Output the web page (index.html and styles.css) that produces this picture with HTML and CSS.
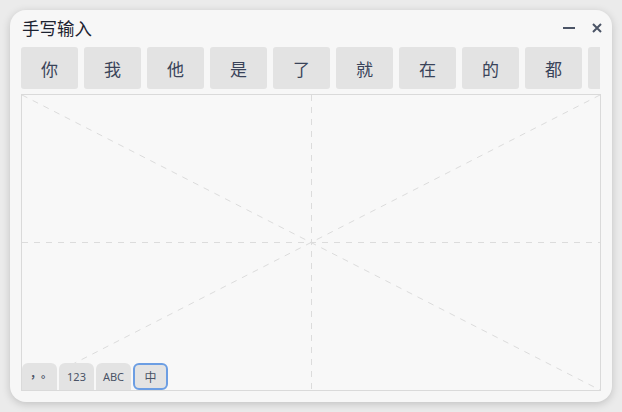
FILE: index.html
```html
<!DOCTYPE html>
<html lang="zh">
<head>
<meta charset="utf-8">
<link rel="stylesheet" href="styles.css">
</head>
<body>
<div class="window">
  <div class="titlebar">
    <div class="title">手写输入</div>
    <div class="controls">
      <svg class="ctl" width="14" height="14" viewBox="0 0 14 14"><path d="M1 7H13" stroke="#4b5466" stroke-width="2"/></svg>
      <svg class="ctl" width="12" height="12" viewBox="0 0 12 12"><path d="M2 2L10 10M10 2L2 10" stroke="#4b5466" stroke-width="2"/></svg>
    </div>
  </div>
  <div class="candidates">
    <div class="cand">你</div>
    <div class="cand">我</div>
    <div class="cand">他</div>
    <div class="cand">是</div>
    <div class="cand">了</div>
    <div class="cand">就</div>
    <div class="cand">在</div>
    <div class="cand">的</div>
    <div class="cand">都</div>
    <div class="cand"></div>
  </div>
  <div class="canvas">
    <svg class="guides" viewBox="0 0 578 295" preserveAspectRatio="none">
      <g stroke="#dcdcdc" stroke-width="1" stroke-dasharray="6 6" fill="none">
        <line x1="0" y1="147.5" x2="578" y2="147.5"/>
        <line x1="289.5" y1="0" x2="289.5" y2="295"/>
        <line x1="0" y1="0" x2="578" y2="295"/>
        <line x1="578" y1="0" x2="0" y2="295"/>
      </g>
    </svg>
    <div class="modes">
      <div class="mode punct"><span class="p">，</span><span class="p">。</span></div>
      <div class="mode">123</div>
      <div class="mode">ABC</div>
      <div class="mode active">中</div>
    </div>
  </div>
</div>
</body>
</html>
```

FILE: styles.css
```css
html, body {
  margin: 0;
  padding: 0;
  background: #ebebeb;
  width: 622px;
  height: 412px;
  overflow: hidden;
  font-family: "Noto Sans", "Noto Sans CJK SC", sans-serif;
}

.window {
  margin: 10px;
  width: 602px;
  height: 392px;
  box-sizing: border-box;
  background: #f7f7f7;
  border-radius: 16px;
  box-shadow: 0 2px 8px rgba(0, 0, 0, 0.18);
  padding: 0 11px 11px 11px;
  display: flex;
  flex-direction: column;
}

.titlebar {
  height: 37px;
  display: flex;
  align-items: center;
  justify-content: space-between;
  padding-left: 1px;
}

.title {
  font-family: "Noto Sans CJK SC", sans-serif;
  font-size: 17.5px;
  color: #1d2331;
  line-height: 20px;
  margin-top: -1px;
}

.controls {
  display: flex;
  align-items: center;
  gap: 15px;
  margin-right: -2px;
  margin-top: -2px;
}

.ctl {
  display: block;
}

.candidates {
  display: flex;
  gap: 6px;
  height: 42px;
  overflow: hidden;
  width: 579px;
}

.cand {
  flex: 0 0 57px;
  height: 42px;
  background: #e3e3e3;
  border-radius: 3px;
  display: flex;
  align-items: center;
  justify-content: center;
  font-family: "Noto Sans CJK SC", sans-serif;
  font-size: 17px;
  color: #3a4359;
}

.canvas {
  margin-top: 5px;
  flex: 1;
  position: relative;
  border: 1px solid #dadada;
  background: #f8f8f8;
}

.guides {
  display: block;
  width: 100%;
  height: 100%;
}

.modes {
  position: absolute;
  left: 0;
  bottom: 0;
  display: flex;
  gap: 2px;
}

.mode {
  width: 35px;
  height: 27px;
  box-sizing: border-box;
  background: #e3e3e3;
  border-radius: 6px 6px 0 0;
  display: flex;
  align-items: center;
  justify-content: center;
  font-size: 11px;
  color: #4a5366;
}

.mode.punct {
  font-family: "Noto Sans CJK SC", sans-serif;
  font-size: 11px;
  font-weight: bold;
  padding-left: 3px;
}

.p {
  display: inline-block;
  transform: translateY(-4px);
}

.mode.active {
  border: 2px solid #6c9ee3;
  border-radius: 6px;
  font-family: "Noto Sans CJK SC", sans-serif;
  font-size: 12px;
}
```
